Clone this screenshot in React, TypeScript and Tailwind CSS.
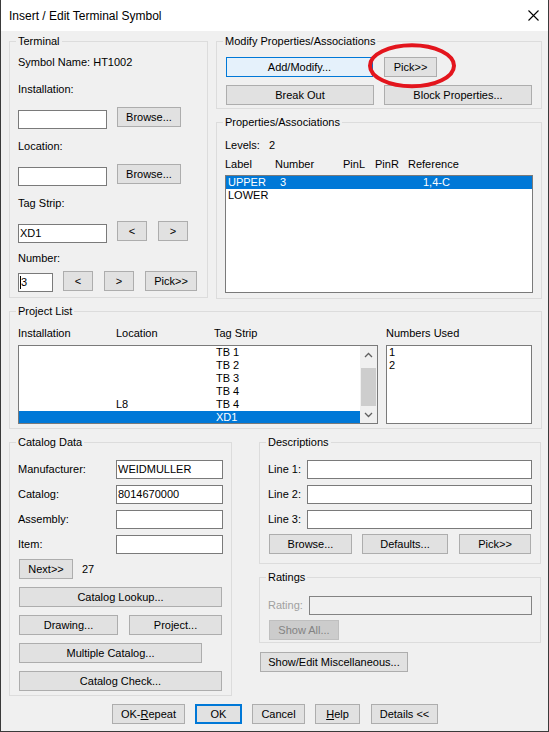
import React from "react";

const Btn = ({
  w,
  children,
  cls = "",
}: {
  w: string;
  children: React.ReactNode;
  cls?: string;
}) => (
  <div
    className={`${w} h-[20px] shrink-0 flex items-center justify-center bg-[#e1e1e1] border border-[#adadad] ${cls}`}
  >
    {children}
  </div>
);

const Input = ({ w, text, cls = "" }: { w: string; text?: React.ReactNode; cls?: string }) => (
  <div className={`${w} h-[19px] shrink-0 flex items-center bg-white border border-[#7a7a7a] pl-[1px] ${cls}`}>
    {text}
  </div>
);

const Group = ({
  title,
  box,
  children,
}: {
  title: string;
  box: string;
  children: React.ReactNode;
}) => (
  <div className={`${box} shrink-0 border border-[#dcdcdc] flex flex-col`}>
    <div className="-mt-[7px] ml-[6px] px-[2px] w-fit h-[13px] bg-[#f0f0f0]">{title}</div>
    {children}
  </div>
);

const Chevron = ({ up }: { up?: boolean }) => (
  <svg width="9" height="6" viewBox="0 0 9 6">
    <polyline
      points={up ? "1,5 4.5,1.5 8,5" : "1,1 4.5,4.5 8,1"}
      fill="none"
      stroke="#606060"
      strokeWidth="1.3"
    />
  </svg>
);

export default function App() {
  const projectRows = [
    { loc: "", tag: "TB 1" },
    { loc: "", tag: "TB 2" },
    { loc: "", tag: "TB 3" },
    { loc: "", tag: "TB 4" },
    { loc: "L8", tag: "TB 4" },
    { loc: "", tag: "XD1", sel: true },
  ];

  return (
    <div className="relative w-[549px] h-[732px] bg-[#f0f0f0] border-x border-b border-[#3a3a3a] flex flex-col font-['Liberation_Sans',Arial,sans-serif] text-[11px] leading-[13px] text-black overflow-hidden">
      {/* title bar */}
      <div className="h-[31px] shrink-0 bg-white flex items-center justify-between pl-[8px] pr-[9px] text-[12px]">
        <span className="mt-[1px]">Insert / Edit Terminal Symbol</span>
        <svg width="11" height="11" viewBox="0 0 11 11">
          <path d="M0.5 0.5 L10.5 10.5 M10.5 0.5 L0.5 10.5" stroke="#000" strokeWidth="1.1" />
        </svg>
      </div>

      <div className="flex flex-col pl-[8px] pt-[10px]">
        {/* row 1 */}
        <div className="flex">
          <Group title="Terminal" box="w-[199px] h-[257px]">
            <div className="flex flex-col pl-[8px]">
              <div className="mt-[8px]">Symbol Name: HT1002</div>
              <div className="mt-[14px]">Installation:</div>
              <div className="mt-[11px] h-[20px] flex items-start">
                <Input w="w-[89px]" cls="mt-[3px]" />
                <Btn w="w-[64px]" cls="ml-[10px]">Browse...</Btn>
              </div>
              <div className="mt-[13px]">Location:</div>
              <div className="mt-[11px] h-[20px] flex items-start">
                <Input w="w-[89px]" cls="mt-[3px]" />
                <Btn w="w-[64px]" cls="ml-[10px]">Browse...</Btn>
              </div>
              <div className="mt-[13px]">Tag Strip:</div>
              <div className="mt-[11px] h-[20px] flex items-start">
                <Input w="w-[89px]" cls="mt-[3px]" text="XD1" />
                <Btn w="w-[30px]" cls="ml-[10px]">&lt;</Btn>
                <Btn w="w-[30px]" cls="ml-[11px]">&gt;</Btn>
              </div>
              <div className="mt-[11px]">Number:</div>
              <div className="mt-[6px] h-[20px] flex items-start">
                <Input
                  w="w-[35px]"
                  cls="mt-[2px]"
                  text={
                    <span className="flex items-center">
                      <span className="w-[1px] h-[13px] bg-black" />
                      <span>3</span>
                    </span>
                  }
                />
                <Btn w="w-[30px]" cls="ml-[10px]">&lt;</Btn>
                <Btn w="w-[30px]" cls="ml-[11px]">&gt;</Btn>
                <Btn w="w-[52px]" cls="ml-[11px]">Pick&gt;&gt;</Btn>
              </div>
            </div>
          </Group>

          <div className="ml-[8px] flex flex-col">
            <Group title="Modify Properties/Associations" box="w-[326px] h-[68px]">
              <div className="flex flex-col pl-[9px]">
                <div className="mt-[9px] flex">
                  <Btn w="w-[147px]" cls="!bg-[#e5f1fb] !border-[#0078d7]">Add/Modify...</Btn>
                  <Btn w="w-[53px]" cls="ml-[11px]">Pick&gt;&gt;</Btn>
                </div>
                <div className="mt-[8px] flex">
                  <Btn w="w-[148px]">Break Out</Btn>
                  <Btn w="w-[148px]" cls="ml-[10px]">Block Properties...</Btn>
                </div>
              </div>
            </Group>

            <div className="mt-[13px]">
              <Group title="Properties/Associations" box="w-[326px] h-[177px]">
                <div className="flex flex-col pl-[8px]">
                  <div className="mt-[10px] flex">
                    <span className="w-[44px]">Levels:</span>
                    <span>2</span>
                  </div>
                  <div className="mt-[6px] flex">
                    <span className="w-[50px]">Label</span>
                    <span className="w-[68px]">Number</span>
                    <span className="w-[32px]">PinL</span>
                    <span className="w-[33px]">PinR</span>
                    <span>Reference</span>
                  </div>
                  <div className="mt-[4px] w-[308px] h-[118px] bg-white border border-[#7a7a7a] flex flex-col">
                    <div className="h-[13px] bg-[#0078d7] text-white flex pl-[2px]">
                      <span className="w-[52px]">UPPER</span>
                      <span className="w-[143px]">3</span>
                      <span>1,4-C</span>
                    </div>
                    <div className="h-[13px] flex pl-[2px]">LOWER</div>
                  </div>
                </div>
              </Group>
            </div>
          </div>
        </div>

        {/* project list */}
        <div className="mt-[12px]">
          <Group title="Project List" box="w-[533px] h-[118px]">
            <div className="flex flex-col pl-[8px]">
              <div className="mt-[9px] flex">
                <span className="w-[98px]">Installation</span>
                <span className="w-[98px]">Location</span>
                <span className="w-[172px]">Tag Strip</span>
                <span>Numbers Used</span>
              </div>
              <div className="mt-[5px] flex">
                <div className="w-[360px] h-[79px] bg-white border border-[#7a7a7a] flex overflow-hidden">
                  <div className="flex-1 flex flex-col">
                    {projectRows.map((r, i) => (
                      <div
                        key={i}
                        className={`h-[13px] shrink-0 flex ${r.sel ? "bg-[#0078d7] text-white" : ""}`}
                      >
                        <span className="w-[97px]"></span>
                        <span className="w-[100px]">{r.loc}</span>
                        <span>{r.tag}</span>
                      </div>
                    ))}
                  </div>
                  <div className="w-[17px] shrink-0 bg-[#f0f0f0] flex flex-col">
                    <div className="h-[17px] flex items-center justify-center">
                      <Chevron up />
                    </div>
                    <div className="h-[5px]" />
                    <div className="h-[38px] mx-[1px] bg-[#cdcdcd]" />
                    <div className="h-[17px] flex items-center justify-center">
                      <Chevron />
                    </div>
                  </div>
                </div>
                <div className="ml-[8px] w-[146px] h-[79px] bg-white border border-[#7a7a7a] flex flex-col pl-[2px]">
                  <div className="h-[13px]">1</div>
                  <div className="h-[13px]">2</div>
                </div>
              </div>
            </div>
          </Group>
        </div>

        {/* row 3 */}
        <div className="mt-[13px] flex">
          <Group title="Catalog Data" box="w-[223px] h-[254px]">
            <div className="flex flex-col pl-[8px]">
              {[
                ["Manufacturer:", "WEIDMULLER"],
                ["Catalog:", "8014670000"],
                ["Assembly:", ""],
                ["Item:", ""],
              ].map(([l, v], i) => (
                <div key={l} className={`flex items-center ${i === 0 ? "mt-[11px]" : "mt-[6px]"}`}>
                  <span className="w-[98px]">{l}</span>
                  <Input w="w-[107px]" text={v} />
                </div>
              ))}
              <div className="mt-[5px] flex items-center">
                <Btn w="w-[54px]" cls="ml-[1px]">Next&gt;&gt;</Btn>
                <span className="ml-[9px]">27</span>
              </div>
              <Btn w="w-[203px]" cls="ml-[1px] mt-[8px]">Catalog Lookup...</Btn>
              <div className="mt-[8px] flex">
                <Btn w="w-[99px]" cls="ml-[1px]">Drawing...</Btn>
                <Btn w="w-[93px]" cls="ml-[11px]">Project...</Btn>
              </div>
              <Btn w="w-[183px]" cls="ml-[1px] mt-[8px]">Multiple Catalog...</Btn>
              <Btn w="w-[203px]" cls="ml-[1px] mt-[8px]">Catalog Check...</Btn>
            </div>
          </Group>

          <div className="ml-[27px] flex flex-col">
            <Group title="Descriptions" box="w-[282px] h-[122px]">
              <div className="flex flex-col pl-[8px]">
                {["Line 1:", "Line 2:", "Line 3:"].map((l, i) => (
                  <div key={l} className={`flex items-center ${i === 0 ? "mt-[11px]" : "mt-[6px]"}`}>
                    <span className="w-[39px]">{l}</span>
                    <Input w="w-[225px]" />
                  </div>
                ))}
                <div className="mt-[5px] flex">
                  <Btn w="w-[83px]" cls="ml-[1px]">Browse...</Btn>
                  <Btn w="w-[86px]" cls="ml-[10px]">Defaults...</Btn>
                  <Btn w="w-[72px]" cls="ml-[11px]">Pick&gt;&gt;</Btn>
                </div>
              </div>
            </Group>
            <div className="mt-[13px]">
              <Group title="Ratings" box="w-[282px] h-[66px]">
                <div className="flex flex-col pl-[8px]">
                  <div className="mt-[12px] flex items-center">
                    <span className="w-[41px] text-[#a0a0a0]">Rating:</span>
                    <div className="w-[223px] h-[19px] border border-[#838383]" />
                  </div>
                  <div className="mt-[5px] ml-[1px] w-[70px] h-[20px] flex items-center justify-center bg-[#cccccc] border border-[#bfbfbf] text-[#838383]">
                    Show All...
                  </div>
                </div>
              </Group>
            </div>
            <Btn w="w-[148px]" cls="mt-[9px] ml-[1px]">Show/Edit Miscellaneous...</Btn>
          </div>
        </div>

        {/* bottom buttons */}
        <div className="mt-[8px] ml-[103px] flex">
          <Btn w="w-[73px]">
            OK-<u>R</u>epeat
          </Btn>
          <Btn w="w-[47px]" cls="ml-[10px] !border-2 !border-[#0078d7]">OK</Btn>
          <Btn w="w-[53px]" cls="ml-[10px]">Cancel</Btn>
          <Btn w="w-[45px]" cls="ml-[10px]">
            <u>H</u>elp
          </Btn>
          <Btn w="w-[67px]" cls="ml-[11px]">Details &lt;&lt;</Btn>
        </div>
      </div>

      {/* red annotation ellipse */}
      <svg className="absolute left-[365px] top-[41px] pointer-events-none" width="92" height="50" viewBox="0 0 92 50">
        <ellipse cx="46" cy="24.7" rx="42" ry="20.5" fill="none" stroke="#e3151d" strokeWidth="4" />
      </svg>
    </div>
  );
}
